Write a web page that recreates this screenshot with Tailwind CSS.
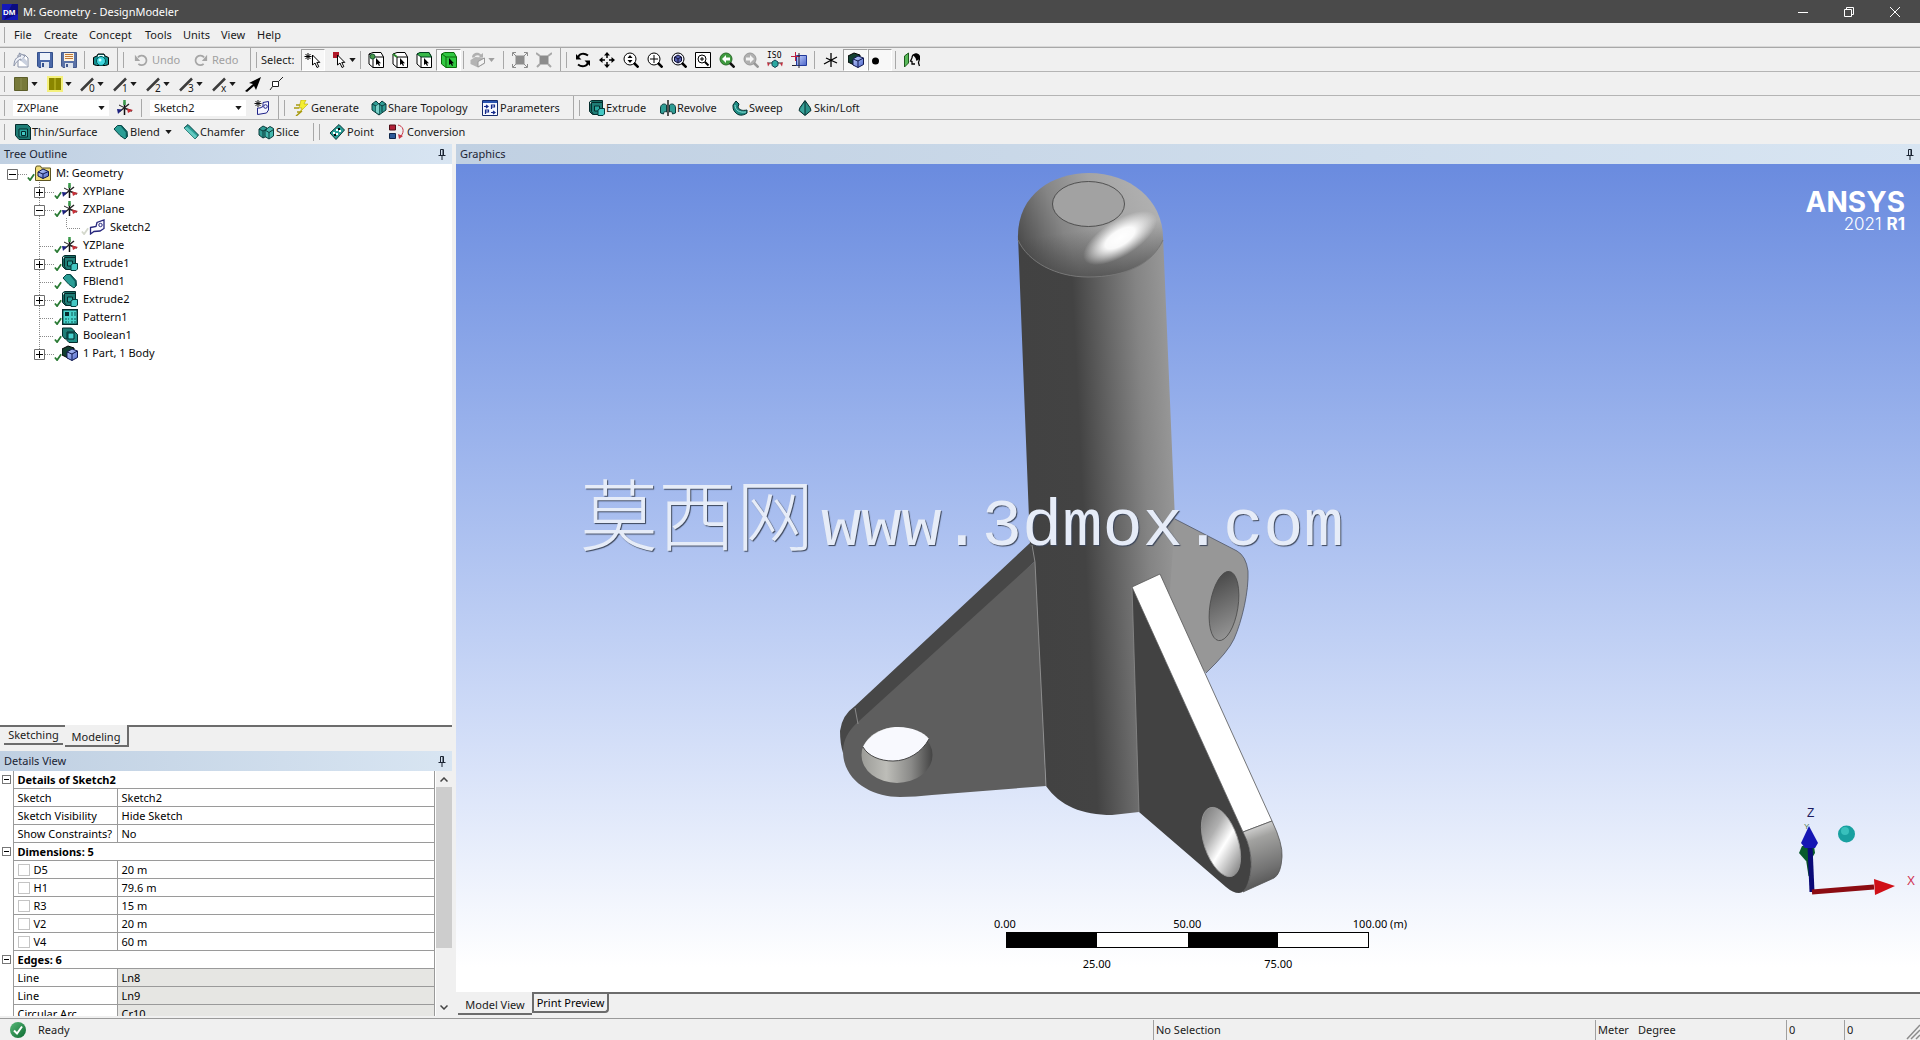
<!DOCTYPE html>
<html lang="en">
<head>
<meta charset="utf-8">
<title>M: Geometry - DesignModeler</title>
<script src="https://cdn.jsdelivr.net/npm/@tailwindcss/browser@4"></script>
</head>
<body class="flex h-screen flex-col overflow-hidden bg-[#f0f0f0] font-['Noto_Sans',sans-serif] text-[11px] leading-4 text-[#1a1a1a]">

<svg class="absolute size-0" aria-hidden="true">
  <defs>
    <linearGradient id="blueFace" x1="0" y1="0" x2="1" y2="1"><stop offset="0" stop-color="#c6d4ff"/><stop offset="1" stop-color="#4a63c8"/></linearGradient>
    <linearGradient id="okFace" x1="0" y1="0" x2="1" y2="1"><stop offset="0" stop-color="#58b878"/><stop offset="1" stop-color="#0c6a30"/></linearGradient>
  </defs>
  <symbol id="caret" viewBox="0 0 8 5"><path d="M0 0h8L4 5z" fill="currentColor"/></symbol>
  <symbol id="pin" viewBox="0 0 8 11"><path d="M2.500.5h3v6h-3zM.5 6.500h7M4 7v4" fill="none" stroke="#1b2433"/><path d="M4.500 1h1v5.500h-1z" fill="#1b2433"/></symbol>
  <symbol id="new" viewBox="0 0 16 16"><path d="M5 3h7l3 3v9H5z" fill="#fff" stroke="#8a93a8"/><path d="M1 14C1 8 3 5 8 4L6 1l6 3-4 5V7c-3 1-5 3-7 7z" fill="#eef1f8" stroke="#8a93a8"/><path d="M10 5l4 4v5L8 9z" fill="#c9d0de"/></symbol>
  <symbol id="save" viewBox="0 0 16 16"><path d="M.5.5h15v15H2l-1.500-1.500z" fill="#4a68a8" stroke="#34508c"/><path d="M3 1h10v7H3z" fill="#eef3fa"/><path d="M4 10h8v6H4z" fill="#dfe5ee"/><path d="M5 11h2v4H5z" fill="#34508c"/></symbol>
  <symbol id="saveas" viewBox="0 0 16 16"><path d="M.5.5h15v15H2l-1.500-1.500z" fill="#5b73a8" stroke="#44598c"/><path d="M3 1h10v8H3z" fill="#fff3dc"/><path d="M4 2.500h8M4 4.500h8M4 6.500h8" stroke="#c07838"/><path d="M4 11h8v5H4z" fill="#dfe5ee"/><path d="M5 12h2v3H5z" fill="#44598c"/></symbol>
  <symbol id="camera" viewBox="0 0 16 16"><path d="M.5 5.500L4 4l1-2h6l1 2 3.500 1.500v7l-3 1h-9l-3-1z" fill="#138f8f" stroke="#000"/><path d="M5 3h6v2H5z" fill="#e8ffff"/><circle cx="8" cy="9" r="4.500" fill="#3fd8e0" stroke="#055"/><circle cx="7" cy="8" r="1.500" fill="#c8ffff"/></symbol>
  <symbol id="undo" viewBox="0 0 16 16"><path d="M4.500 5A5.500 5.500 0 1 1 5 12.500" fill="none" stroke="#a6a6a6" stroke-width="2"/><path d="M1 2v7h6z" fill="#a6a6a6"/></symbol>
  <symbol id="redo" viewBox="0 0 16 16"><path d="M11.500 5A5.500 5.500 0 1 0 11 12.500" fill="none" stroke="#a6a6a6" stroke-width="2"/><path d="M15 2v7H9z" fill="#a6a6a6"/></symbol>
  <symbol id="pick" viewBox="0 0 18 16"><path d="M4 1v7M.5 4.500h7M1.500 2l5 5M6.500 2l-5 5" stroke="#000"/><path d="M8.500 3v10l2.500-2 2 4.500 1.800-.9-2-4.200h3z" fill="#fff" stroke="#000"/></symbol>
  <symbol id="pickred" viewBox="0 0 18 16"><path d="M2 0h6v6H2z" fill="#b01828"/><path d="M6.500 3v10l2.500-2 2 4.500 1.800-.9-2-4.200h3z" fill="#fff" stroke="#000"/></symbol>
  <symbol id="cubeV" viewBox="0 0 16 16"><path d="M1 2l4-1.500h8L15.500 5v10.500H5L1 12z" fill="#fff" stroke="#000"/><path d="M1 2l4 3h10.500M5 5v10.500" fill="none" stroke="#000"/><circle cx="4.500" cy="4.500" r="2.500" fill="#4a9a4a" stroke="#153"/><path d="M8 6v7l1.700-1.300L11 14l1-.5-1-2.300h2z"/></symbol>
  <symbol id="cubeE" viewBox="0 0 16 16"><path d="M1 2l4-1.500h8L15.500 5v10.500H5L1 12z" fill="#fff" stroke="#000"/><path d="M1 2l4 3h10.500M5 5v10.500" fill="none" stroke="#000"/><path d="M1 2l4 3" stroke="#2c8a2c" stroke-width="2"/><path d="M8 6v7l1.700-1.300L11 14l1-.5-1-2.300h2z"/></symbol>
  <symbol id="cubeF" viewBox="0 0 16 16"><path d="M1 2l4-1.500h8L15.500 5v10.500H5L1 12z" fill="#fff" stroke="#000"/><path d="M1 2l3-1.500h9L15.500 5H5z" fill="#38b848" stroke="#042"/><path d="M5 5v10.500" stroke="#000"/><path d="M8 6v7l1.700-1.300L11 14l1-.5-1-2.300h2z"/></symbol>
  <symbol id="cubeB" viewBox="0 0 16 16"><path d="M.5 2l3-1.500h9.500L15.500 5v10.500H5L.5 12z" fill="#30c840" stroke="#0a6a0a"/><path d="M1 2l4 3h10.500M5 5v10.500" fill="none" stroke="#0a6a0a"/><path d="M8 6v7l1.700-1.300L11 14l1-.5-1-2.300h2z"/></symbol>
  <symbol id="cubeG" viewBox="0 0 16 16"><path d="M.5 8l5-3 9.500 1v5.500L8 15.500.5 12z" fill="#b4b4b4"/><path d="M8 9.500l6.500-3.500v5L8 15z" fill="#f4f4f4" stroke="#9a9a9a"/><path d="M2 5.500C2 1 8-1 11 2.500l2-1.500v4.500H8.500l1.500-1.500C8 2.500 5 3 4.500 5.500z" fill="#b0b0b0"/></symbol>
  <symbol id="ext1" viewBox="0 0 16 16"><path d="M3.500 3.500h9v9h-9z" fill="#8c8c8c"/><path d="M.5 4V.5H4M12 .5h3.500V4M15.500 12v3.500H12M4 15.500H.5V12M1 1l3 3M15 1l-3 3M15 15l-3-3M1 15l3-3" fill="none" stroke="#8c8c8c"/></symbol>
  <symbol id="ext2" viewBox="0 0 16 16"><path d="M3.500 3.500h9v9h-9z" fill="#8c8c8c"/><path d="M0 1l4 3M16 1l-4 3M15 15l-3-3M1 15l3-3" fill="none" stroke="#a8a8a8" stroke-width="2"/></symbol>
  <symbol id="rotate" viewBox="0 0 16 16"><path d="M3 5.500C4 1.500 9 .5 13 3.500M13 10.500C12 14.500 7 15.500 3 12.500" fill="none" stroke="#000" stroke-width="2"/><path d="M1 2v5.500h5.500zM15 14V8.500H9.500z"/></symbol>
  <symbol id="pan" viewBox="0 0 16 16"><path d="M8 2v4M8 10v4M2 8h4M10 8h4" stroke="#000" stroke-width="1.500"/><path d="M8 0l3 3.500H5zM8 16l3-3.500H5zM0 8l3.500-3v6zM16 8l-3.500-3v6z"/></symbol>
  <symbol id="zoomud" viewBox="0 0 16 16"><circle cx="7" cy="7" r="6" fill="#fff" stroke="#000"/><path d="M11 11l4.500 4.500" stroke="#000" stroke-width="2.500"/><path d="M7 3l2.500 3h-5zM7 11l2.500-3h-5z"/></symbol>
  <symbol id="zoomin" viewBox="0 0 16 16"><circle cx="7" cy="7" r="6" fill="#fff" stroke="#000"/><path d="M11 11l4.500 4.500" stroke="#000" stroke-width="2.500"/><path d="M7 3v8M3 7h8" stroke="#000"/></symbol>
  <symbol id="zoomfit" viewBox="0 0 16 16"><circle cx="7" cy="7" r="6" fill="#f2f4ff" stroke="#000"/><path d="M11 11l4.500 4.500" stroke="#000" stroke-width="2.500"/><path d="M7 3l3.500 2v4L7 11 3.500 9V5z" fill="#5a64b4" stroke="#113"/><path d="M4 5l3 2 3-2M7 7v4" stroke="#113" fill="none"/></symbol>
  <symbol id="zoombox" viewBox="0 0 16 16"><path d="M.5.5h15v15H.5z" fill="#fff" stroke="#000"/><circle cx="7" cy="7" r="4" fill="none" stroke="#000"/><path d="M10 10l3.500 3.500" stroke="#000" stroke-width="2"/><path d="M7 5v4M5 7h4" stroke="#000"/></symbol>
  <symbol id="zoomprev" viewBox="0 0 16 16"><circle cx="7" cy="7" r="6" fill="#3f9a3f" stroke="#2a6a2a"/><path d="M11 11l4.500 4.500" stroke="#111" stroke-width="2.500"/><path d="M3 7l4-4v2.500h4v3H7V11z" fill="#fff"/></symbol>
  <symbol id="zoomnext" viewBox="0 0 16 16"><circle cx="7" cy="7" r="6" fill="#b0b0b0" stroke="#989898"/><path d="M11 11l4.500 4.500" stroke="#989898" stroke-width="2.500"/><path d="M11 7L7 3v2.500H3v3h4V11z" fill="#f4f4f4"/></symbol>
  <symbol id="iso" viewBox="0 0 16 18"><text x="0" y="7" font-size="8" font-family="DejaVu Sans Mono" fill="#000">ISO</text><path d="M8 9l3 2v3.500l-3 2-3-2V11z" fill="#2aa8a0" stroke="#145"/><path d="M5 12H1M11 12h4" stroke="#333"/><path d="M0 11l3 1.500-2 3zM16 11l-3 1.500 2 3z" fill="#c03040"/></symbol>
  <symbol id="viewblue" viewBox="0 0 16 16"><path d="M5.500 3.500h10v10h-10z" fill="url(#blueFace)" stroke="#223a9a"/><path d="M0 4.500h9M4.500 0v9" stroke="#c02040"/><path d="M1 13.500h4.500M8 1v15" stroke="#223"/></symbol>
  <symbol id="axesbw" viewBox="0 0 16 16"><path d="M8 1v14M1 12l13-7M3 6l11 5" stroke="#000" stroke-width="1.300"/></symbol>
  <symbol id="axes" viewBox="0 0 16 16"><path d="M7.500 2v13" stroke="#111" stroke-width="1.500"/><path d="M7.500 0v5" stroke="#3a9a4a" stroke-width="2.500"/><path d="M7 8l8 3" stroke="#222" stroke-width="1.500"/><path d="M10 8.500l6 1.500-5 3z" fill="#c83038"/><path d="M12 4L2 12" stroke="#222" stroke-width="1.500"/><path d="M0 9l5 .5L1 14z" fill="#1c2080"/><path d="M2 5l6 3" stroke="#222"/></symbol>
  <symbol id="solid" viewBox="0 0 16 16"><path d="M0 4l6-3 6 2v8l-6 2-6-3z" fill="#123f30" stroke="#000"/><path d="M5 7l5-3 5.500 2v6.500L10 15.500 5 13z" fill="url(#blueFace)" stroke="#101850"/><path d="M5 7l5 2 5.500-3M10 9v6.500" fill="none" stroke="#101850"/></symbol>
  <symbol id="dot" viewBox="0 0 16 16"><circle cx="3.500" cy="9" r="3.500"/></symbol>
  <symbol id="lookat" viewBox="0 0 16 16"><path d="M.5 4l4-3v10l-4 4z" fill="#58b858" stroke="#1c5a1c"/><path d="M8 6c0-5 7-5 7.500-1 .5 3-1 4-1 6l1 3M8 6l-1.500 3L8 9.500V12h3" fill="none" stroke="#000" stroke-width="1.300"/><path d="M9 3c3-3 7-1 6.500 4l-3 2-1-3z"/></symbol>
  <symbol id="olive" viewBox="0 0 14 14"><path d="M.5.5h13v13H.5z" fill="#77793a" stroke="#5c5e2a"/><path d="M7 1v12" stroke="#8c8e50"/></symbol>
  <symbol id="yellow" viewBox="0 0 16 16"><path d="M0 0h16v16H0z" fill="#f4f07c"/><path d="M2 2h12v12H2z" fill="#8a8600"/><path d="M8 2v12" stroke="#c8c430"/></symbol>
  <symbol id="slash" viewBox="0 0 16 16"><path d="M1 14.500L13 2.500" stroke="#3c3c3c" stroke-width="2.500"/></symbol>
  <symbol id="bigarrow" viewBox="0 0 16 16"><path d="M0 15L8 8 4 7 16 1l-5 13-2-4-7 6z"/></symbol>
  <symbol id="node" viewBox="0 0 16 16"><path d="M3.500 5.500h6v5h-6zM9.500 5.500L14 1M3.500 10.500L1 14" fill="#fff" stroke="#222"/></symbol>
  <symbol id="newsketch" viewBox="0 0 16 16"><path d="M3.500 8v6.500l9-1.500 2-3V1.500L9 2.500v4L6 8z" fill="#f4f4ff" stroke="#1e2288"/><circle cx="11.500" cy="6.500" r="1.800" fill="none" stroke="#1e2288"/><path d="M4 0v7M.5 3.500h7M1.500 1l5 5M6.500 1l-5 5" stroke="#111"/></symbol>
  <symbol id="sketch" viewBox="0 0 16 16"><path d="M1.500 8.500L7 7.500l1-4L15 1v8.500L11 12l-6 .5L1.500 15z" fill="#fafaff" stroke="#26267c" stroke-width="1.300"/><circle cx="11.500" cy="6" r="1.700" fill="none" stroke="#26267c"/></symbol>
  <symbol id="bolt" viewBox="0 0 16 16"><path d="M8 0h5l-2 4h4l-8 8 2-4H6z" fill="#f4ee30" stroke="#b8a800" stroke-width=".6"/><path d="M3 5h4M1 8h5M4 12h4M3 16l6-5" stroke="#a89a10" stroke-width="1.500"/></symbol>
  <symbol id="share" viewBox="0 0 16 16"><path d="M1 4l4-3 3 3 3-3 4 3v6l-7 5-7-5z" fill="#2f9c94" stroke="#0c3c3c"/><path d="M1 4l4 2 3-2 3 2 4-2M5 6v6M11 6v6M8 4v11" fill="none" stroke="#0c3c3c"/><path d="M5 6l3-2v10l-3-2z" fill="#7ad0c8"/></symbol>
  <symbol id="param" viewBox="0 0 16 16"><path d="M.5.5h15v15H.5z" fill="#f6f8ff" stroke="#142a6c"/><path d="M1 1h14v2H1z" fill="#2a55b0"/><path d="M2 6.500h3M4 5l2 1.500L4 8M9.500 9V5h3v2h-3M3.500 14v-4h3v2h-3M9 12.500h4M11 11l2 1.500L11 14" fill="none" stroke="#142a8c" stroke-width="1.200"/></symbol>
  <symbol id="extrude" viewBox="0 0 16 16"><path d="M.5 2l2-1.500h11v3M.5 2v9.500l3 3h6" fill="#176a62" stroke="#042c2c"/><path d="M2.500 2.500h11v12h-9l-2-3z" fill="#1f7d76" stroke="#042c2c"/><path d="M5.500 6h5v5h-5z" fill="#2aa69e" stroke="#042c2c"/><path d="M9 10l2-1.500h4.500V14l-1.500 1.500H9z" fill="#45c8c4" stroke="#053c3c"/></symbol>
  <symbol id="thin" viewBox="0 0 16 16"><path d="M.5.5h12l3 3v12H4l-3.500-4z" fill="#1f7d76" stroke="#042c2c"/><path d="M4 5h8.500v8H4z" fill="#2aa69e" stroke="#042c2c"/><path d="M6.500 7.500h4v4h-4z" fill="#45c8c4" stroke="#042c2c"/></symbol>
  <symbol id="revolve" viewBox="0 0 16 16"><path d="M.5 8c0-4 4-5 6-3v7c-2-1-3 0-3 2l-3-1zM15.500 8c0-4-4-5-6-3v7c2-1 3 0 3 2l3-1z" fill="#2f9c94" stroke="#0c3c3c"/><path d="M8 0v16" stroke="#000" stroke-width="1.300"/></symbol>
  <symbol id="sweep" viewBox="0 0 16 16"><path d="M1 5l3-4 3 3-1 3c1 3 4 4 9 3v3c-4 3-9 3-12-1-2-2-2-4-2-7z" fill="#1f8c84" stroke="#042c2c"/><path d="M3 5c0 5 4 8 11 7" fill="none" stroke="#8cded6"/></symbol>
  <symbol id="loft" viewBox="0 0 16 16"><path d="M8 .5l5 7 1 3-6 5-6-5 1-3z" fill="#2a9088" stroke="#042c2c"/><path d="M8 2v12.500l-5-4.500z" fill="#3ca49c"/><path d="M8 1v14" stroke="#042c2c"/></symbol>
  <symbol id="blend" viewBox="0 0 16 16"><path d="M1 5l3.500-3.500h4l5.500 6 .5 5-2.500 2.500-5-3.500z" fill="#2a9e96" stroke="#064444"/><path d="M8.500 2l5 6v5" fill="none" stroke="#0d5a58" stroke-width="1.500"/></symbol>
  <symbol id="chamfer" viewBox="0 0 16 16"><path d="M1 4l4-3.500L15.500 11 12 15z" fill="#2a9e96" stroke="#064444"/><path d="M1 4l3-1 10 9-2 3z" fill="#64c8c0"/></symbol>
  <symbol id="slice" viewBox="0 0 16 16"><path d="M1 5l4-3 4 2v8l-4 2-4-3z" fill="#2f9c94" stroke="#0c3c3c"/><path d="M7 6l5-3.500 3.500 2V12L11 15l-4-2.500z" fill="#45b8ae" stroke="#0c3c3c"/><path d="M1 5l4 2 4-2M5 7v7M7 6l4 2.500 4.500-3M11 8.500V15" fill="none" stroke="#0c3c3c"/></symbol>
  <symbol id="point" viewBox="0 0 16 16"><path d="M1 9L10 .5 15.500 6 7 15.500z" fill="#2a9e96" stroke="#043838"/><path d="M4 9h2M7 6h2M7 10h2M10 7h2" stroke="#fff" stroke-width="2"/><path d="M5 11h2M10 4v2" stroke="#000" stroke-width="2"/></symbol>
  <symbol id="convert" viewBox="0 0 16 16"><path d="M.5 1h6v5h-6z" fill="#b02038" stroke="#501018"/><path d="M.5 9.500h6v5h-6z" fill="#2c5a98" stroke="#10284c"/><path d="M9 1c5 1 7 6 3 11" fill="none" stroke="#c83848"/><path d="M9 10l1 5 4-3z" fill="#c83848"/></symbol>
  <symbol id="pattern" viewBox="0 0 16 16"><path d="M.7.700h14.600v14.600H.7z" fill="#48d4cc" stroke="#042c2c" stroke-width="1.400"/><path d="M3 3h4v4H3z" fill="#042c2c"/><path d="M9 4h5M9 6h5M3 10h4M3 13h4M9 10h5M9 13h5" stroke="#0a5450" stroke-dasharray="2 1"/></symbol>
  <symbol id="boolean" viewBox="0 0 16 16"><path d="M.5 1h9l3 3v8H3l-2.500-3z" fill="#1f7d76" stroke="#042c2c"/><path d="M5 5h8l2.500 2.500v8H7l-2-2z" fill="#1f8c84" stroke="#042c2c"/><path d="M6 6h6v6H6z" fill="#45d0cc" stroke="#042c2c"/></symbol>
  <symbol id="model" viewBox="0 0 16 16"><path d="M.5 3l1-2h4l1 2h9v12.500H.5z" fill="#f0dc78" stroke="#5c5420"/><path d="M3 7l5-3 5.500 2.500V11L8 13.500 3 11z" fill="url(#blueFace)" stroke="#101850"/><path d="M3 7l5 2 5.500-2.500M8 9v4.500" fill="none" stroke="#101850"/></symbol>
  <symbol id="check" viewBox="0 0 9 9"><path d="M1 5l2.500 3L8 1.500" fill="none" stroke="currentColor" stroke-width="2"/></symbol>
  <symbol id="plus" viewBox="0 0 27 18"><path d="M12.500 0v18M18 10.500h9" stroke="#8a8a8a" stroke-dasharray="1 1"/><path d="M7.500 5.500h10v10h-10z" fill="#fff" stroke="#6e6e6e"/><path d="M9 10.500h7M12.500 7v7" stroke="#000"/></symbol>
  <symbol id="plusend" viewBox="0 0 27 18"><path d="M12.500 0v6M18 10.500h9" stroke="#8a8a8a" stroke-dasharray="1 1"/><path d="M7.500 5.500h10v10h-10z" fill="#fff" stroke="#6e6e6e"/><path d="M9 10.500h7M12.500 7v7" stroke="#000"/></symbol>
  <symbol id="minus" viewBox="0 0 27 18"><path d="M12.500 0v18M18 10.500h9" stroke="#8a8a8a" stroke-dasharray="1 1"/><path d="M7.500 5.500h10v10h-10z" fill="#fff" stroke="#6e6e6e"/><path d="M9 10.500h7" stroke="#000"/></symbol>
  <symbol id="minusroot" viewBox="0 0 27 18"><path d="M18 10.500h9" stroke="#8a8a8a" stroke-dasharray="1 1"/><path d="M7.500 5.500h10v10h-10z" fill="#fff" stroke="#6e6e6e"/><path d="M9 10.500h7" stroke="#000"/></symbol>
  <symbol id="tee" viewBox="0 0 27 18"><path d="M12.500 0v18M13 10.500h14" stroke="#8a8a8a" stroke-dasharray="1 1"/></symbol>
  <symbol id="ell" viewBox="0 0 27 18"><path d="M12.500 0v10M13 10.500h14" stroke="#8a8a8a" stroke-dasharray="1 1"/></symbol>
  <symbol id="vert" viewBox="0 0 27 18"><path d="M12.500 0v18" stroke="#8a8a8a" stroke-dasharray="1 1"/></symbol>
</svg>

<header class="flex h-[23px] shrink-0 items-center bg-[#4a4a4a] text-white">
  <svg class="ml-[2px] size-4" viewBox="0 0 16 16"><path d="M0 0h16v16H0z" fill="#1418b8"/><path d="M2 16L10 0h6v10z" fill="#0a0c80"/><text x="1" y="11" font-size="8" font-weight="700" fill="#fff" font-family="Liberation Sans">DM</text></svg>
  <h1 class="ml-[5px] flex-1">M: Geometry - DesignModeler</h1>
  <button aria-label="Minimize" class="grid h-full w-[46px] place-items-center"><svg class="size-[10px]" viewBox="0 0 10 10"><path d="M0 5.500h10" stroke="#fff"/></svg></button>
  <button aria-label="Restore" class="grid h-full w-[46px] place-items-center"><svg class="size-[10px]" viewBox="0 0 10 10"><path d="M.5 2.500h7v7h-7zM2.500 2V.5h7v7H8" fill="none" stroke="#fff"/></svg></button>
  <button aria-label="Close" class="grid h-full w-[46px] place-items-center"><svg class="size-[10px]" viewBox="0 0 10 10"><path d="M0 0l10 10M10 0L0 10" stroke="#fff"/></svg></button>
  <span class="w-0.5"></span>
</header>

<nav class="flex h-6 shrink-0 items-center border-b border-[#d8d8d8]" aria-label="Menu">
  <span class="mr-[9px] ml-1 h-4 w-px bg-[#a8a8a8]"></span>
  <button class="w-[30px] text-left">File</button>
  <button class="w-[45px] text-left">Create</button>
  <button class="w-[56px] text-left">Concept</button>
  <button class="w-[38px] text-left">Tools</button>
  <button class="w-[38px] text-left">Units</button>
  <button class="w-[36px] text-left">View</button>
  <button class="w-[36px] text-left">Help</button>
</nav>

<div class="flex h-[25px] shrink-0 items-center border-y border-b-[#b4b4b4] border-t-[#a8a8a8]" role="toolbar" aria-label="Standard">
  <span class="mr-1 ml-1 h-4 w-px bg-[#a8a8a8]"></span>
  <button aria-label="New" class="grid w-6 place-items-center"><svg class="size-4"><use href="#new"/></svg></button>
  <button aria-label="Save" class="grid w-6 place-items-center"><svg class="size-4"><use href="#save"/></svg></button>
  <button aria-label="Export" class="grid w-6 place-items-center"><svg class="size-4"><use href="#saveas"/></svg></button>
  <span class="mx-[3px] h-[18px] w-px bg-[#a8a8a8]"></span>
  <button aria-label="Capture" class="grid w-[26px] place-items-center"><svg class="size-4"><use href="#camera"/></svg></button>
  <span class="mr-[5px] ml-[3px] h-full w-px bg-[#a8a8a8]"></span>
  <span class="mr-[10px] h-4 w-px bg-[#a8a8a8]"></span>
  <button class="flex w-[60px] items-center gap-1 text-[#a0a0a0]"><svg class="size-[14px]"><use href="#undo"/></svg>Undo</button>
  <button class="flex w-[56px] items-center gap-1 text-[#a0a0a0]"><svg class="size-[14px]"><use href="#redo"/></svg>Redo</button>
  <span class="mr-[5px] h-full w-px bg-[#a8a8a8]"></span>
  <span class="mr-1 h-4 w-px bg-[#a8a8a8]"></span>
  <span class="w-10">Select:</span>
  <button aria-label="New selection" class="grid h-[22px] w-6 place-items-center border border-r-white border-b-white border-l-[#a0a0a0] border-t-[#a0a0a0] bg-[#f8f8f8]"><svg class="h-4 w-[18px]"><use href="#pick"/></svg></button>
  <button aria-label="Select mode" class="flex w-[31px] items-center justify-end"><svg class="h-4 w-[18px]"><use href="#pickred"/></svg><svg class="h-1 w-[7px]"><use href="#caret"/></svg></button>
  <span class="mr-[3px] ml-1 h-[18px] w-px bg-[#a8a8a8]"></span>
  <button aria-label="Points" class="grid w-6 place-items-center"><svg class="size-4"><use href="#cubeV"/></svg></button>
  <button aria-label="Edges" class="grid w-6 place-items-center"><svg class="size-4"><use href="#cubeE"/></svg></button>
  <button aria-label="Faces" class="grid w-6 place-items-center"><svg class="size-4"><use href="#cubeF"/></svg></button>
  <button aria-label="Bodies" class="grid h-[22px] w-[25px] place-items-center border border-r-white border-b-white border-l-[#a0a0a0] border-t-[#a0a0a0] bg-[#f8f8f8]"><svg class="size-4"><use href="#cubeB"/></svg></button>
  <span class="mr-1.5 ml-0.5 h-[18px] w-px bg-[#a8a8a8]"></span>
  <button aria-label="Extend" class="flex w-[28px] items-center gap-0.5 text-[#a0a0a0]"><svg class="size-4"><use href="#cubeG"/></svg><svg class="h-1 w-[7px]"><use href="#caret"/></svg></button>
  <span class="mr-1 ml-[5px] h-[18px] w-px bg-[#a8a8a8]"></span>
  <button aria-label="Expand" class="grid w-6 place-items-center"><svg class="size-4"><use href="#ext1"/></svg></button>
  <button aria-label="Shrink" class="grid w-6 place-items-center"><svg class="size-4"><use href="#ext2"/></svg></button>
  <span class="mr-[5px] ml-1 h-full w-px bg-[#a8a8a8]"></span>
  <span class="mr-1 h-4 w-px bg-[#a8a8a8]"></span>
  <button aria-label="Rotate" class="grid w-6 place-items-center"><svg class="size-4"><use href="#rotate"/></svg></button>
  <button aria-label="Pan" class="grid w-6 place-items-center"><svg class="size-4"><use href="#pan"/></svg></button>
  <button aria-label="Zoom" class="grid w-6 place-items-center"><svg class="size-4"><use href="#zoomud"/></svg></button>
  <button aria-label="Box zoom" class="grid w-6 place-items-center"><svg class="size-4"><use href="#zoomin"/></svg></button>
  <button aria-label="Zoom to fit" class="grid w-6 place-items-center"><svg class="size-4"><use href="#zoomfit"/></svg></button>
  <button aria-label="Magnifier" class="grid w-6 place-items-center"><svg class="size-4"><use href="#zoombox"/></svg></button>
  <button aria-label="Previous view" class="grid w-6 place-items-center"><svg class="size-4"><use href="#zoomprev"/></svg></button>
  <button aria-label="Next view" class="grid w-6 place-items-center"><svg class="size-4"><use href="#zoomnext"/></svg></button>
  <button aria-label="Isometric" class="grid w-6 place-items-center"><svg class="h-[18px] w-4"><use href="#iso"/></svg></button>
  <button aria-label="Plane view" class="grid w-6 place-items-center"><svg class="size-4"><use href="#viewblue"/></svg></button>
  <span class="mr-1 ml-[3px] h-[18px] w-px bg-[#a8a8a8]"></span>
  <button aria-label="Display plane" class="grid w-6 place-items-center"><svg class="size-4"><use href="#axesbw"/></svg></button>
  <button aria-label="Display model" class="grid h-[22px] w-[25px] place-items-center border border-r-white border-b-white border-l-[#a0a0a0] border-t-[#a0a0a0] bg-[#f8f8f8]"><svg class="size-4"><use href="#solid"/></svg></button>
  <button aria-label="Display points" class="grid h-[22px] w-6 place-items-center border border-r-white border-b-white border-l-[#a0a0a0] border-t-[#a0a0a0] bg-[#f8f8f8]"><svg class="size-4"><use href="#dot"/></svg></button>
  <span class="mr-1 ml-[3px] h-[18px] w-px bg-[#a8a8a8]"></span>
  <button aria-label="Look at" class="grid w-6 place-items-center"><svg class="size-4"><use href="#lookat"/></svg></button>
</div>

<div class="flex h-6 shrink-0 items-center border-b border-[#b4b4b4]" role="toolbar" aria-label="Display">
  <span class="mr-[9px] ml-1 h-4 w-px bg-[#a8a8a8]"></span>
  <button aria-label="Face colour" class="flex w-[33px] items-center gap-[3px]"><svg class="size-[14px]"><use href="#olive"/></svg><svg class="h-1 w-[7px]"><use href="#caret"/></svg></button>
  <button aria-label="Edge colour" class="flex w-[33px] items-center gap-0.5"><svg class="size-4"><use href="#yellow"/></svg><svg class="h-1 w-[7px]"><use href="#caret"/></svg></button>
  <button aria-label="Edges 0" class="relative flex w-[33px] items-center gap-px"><svg class="size-4"><use href="#slash"/></svg><span class="absolute top-1 left-[9px] text-[10px]">0</span><svg class="h-1 w-[7px]"><use href="#caret"/></svg></button>
  <button aria-label="Edges 1" class="relative flex w-[33px] items-center gap-px"><svg class="size-4"><use href="#slash"/></svg><span class="absolute top-1 left-[9px] text-[10px]">1</span><svg class="h-1 w-[7px]"><use href="#caret"/></svg></button>
  <button aria-label="Edges 2" class="relative flex w-[33px] items-center gap-px"><svg class="size-4"><use href="#slash"/></svg><span class="absolute top-1 left-[9px] text-[10px]">2</span><svg class="h-1 w-[7px]"><use href="#caret"/></svg></button>
  <button aria-label="Edges 3" class="relative flex w-[33px] items-center gap-px"><svg class="size-4"><use href="#slash"/></svg><span class="absolute top-1 left-[9px] text-[10px]">3</span><svg class="h-1 w-[7px]"><use href="#caret"/></svg></button>
  <button aria-label="Edges x" class="relative flex w-[33px] items-center gap-px"><svg class="size-4"><use href="#slash"/></svg><span class="absolute top-1 left-[9px] text-[10px]">x</span><svg class="h-1 w-[7px]"><use href="#caret"/></svg></button>
  <button aria-label="Edge direction" class="w-6"><svg class="size-4"><use href="#bigarrow"/></svg></button>
  <button aria-label="Display vertices" class="w-6"><svg class="size-4"><use href="#node"/></svg></button>
</div>

<div class="flex h-6 shrink-0 items-center border-b border-[#b4b4b4]" role="toolbar" aria-label="Features">
  <span class="mr-2 ml-1 h-4 w-px bg-[#a8a8a8]"></span>
  <label class="relative flex w-24 items-center"><select aria-label="Active plane" class="h-4 w-full appearance-none bg-white pl-1 outline-none"><option>ZXPlane</option></select><svg class="pointer-events-none absolute right-1 h-1 w-[7px]"><use href="#caret"/></svg></label>
  <button aria-label="New plane" class="grid w-8 place-items-center"><svg class="size-4"><use href="#axes"/></svg></button>
  <span class="mr-2 h-[18px] w-px bg-[#a8a8a8]"></span>
  <label class="relative flex w-24 items-center"><select aria-label="Active sketch" class="h-4 w-full appearance-none bg-white pl-1 outline-none"><option>Sketch2</option></select><svg class="pointer-events-none absolute right-1 h-1 w-[7px]"><use href="#caret"/></svg></label>
  <button aria-label="New sketch" class="grid w-8 place-items-center"><svg class="size-4"><use href="#newsketch"/></svg></button>
  <span class="mr-[5px] h-full w-px bg-[#a8a8a8]"></span>
  <span class="mr-2 h-4 w-px bg-[#a8a8a8]"></span>
  <button class="flex w-[78px] items-center gap-[2px] whitespace-nowrap"><svg class="size-4 shrink-0"><use href="#bolt"/></svg>Generate</button>
  <button class="flex w-[111px] items-center gap-px whitespace-nowrap"><svg class="size-4 shrink-0"><use href="#share"/></svg>Share Topology</button>
  <button class="flex w-[91px] items-center gap-[2px] whitespace-nowrap"><svg class="size-4 shrink-0"><use href="#param"/></svg>Parameters</button>
  <span class="mr-[5px] h-full w-px bg-[#a8a8a8]"></span>
  <span class="mr-[9px] h-4 w-px bg-[#a8a8a8]"></span>
  <button class="flex w-[71px] items-center gap-px whitespace-nowrap"><svg class="size-4 shrink-0"><use href="#extrude"/></svg>Extrude</button>
  <button class="flex w-[72px] items-center gap-px whitespace-nowrap"><svg class="size-4 shrink-0"><use href="#revolve"/></svg>Revolve</button>
  <button class="flex w-[65px] items-center gap-px whitespace-nowrap"><svg class="size-4 shrink-0"><use href="#sweep"/></svg>Sweep</button>
  <button class="flex w-[72px] items-center gap-px whitespace-nowrap"><svg class="size-4 shrink-0"><use href="#loft"/></svg>Skin/Loft</button>
</div>

<div class="flex h-6 shrink-0 items-center" role="toolbar" aria-label="Modify">
  <span class="mr-[10px] ml-1 h-4 w-px bg-[#a8a8a8]"></span>
  <button class="flex w-[98px] items-center gap-px whitespace-nowrap"><svg class="size-4 shrink-0"><use href="#thin"/></svg>Thin/Surface</button>
  <button class="relative flex w-[70px] items-center gap-px whitespace-nowrap"><svg class="size-4 shrink-0"><use href="#blend"/></svg>Blend<svg class="ml-1 h-1 w-[7px]"><use href="#caret"/></svg></button>
  <button class="flex w-[75px] items-center gap-px whitespace-nowrap"><svg class="size-4 shrink-0"><use href="#chamfer"/></svg>Chamfer</button>
  <button class="flex w-[55px] items-center gap-[2px] whitespace-nowrap"><svg class="size-4 shrink-0"><use href="#slice"/></svg>Slice</button>
  <span class="mr-[5px] h-[18px] w-px bg-[#a8a8a8]"></span>
  <span class="mr-[9px] h-4 w-px bg-[#a8a8a8]"></span>
  <button class="flex w-[60px] items-center gap-[2px] whitespace-nowrap"><svg class="size-4 shrink-0"><use href="#point"/></svg>Point</button>
  <button class="flex w-[80px] items-center gap-[2px] whitespace-nowrap"><svg class="size-4 shrink-0"><use href="#convert"/></svg>Conversion</button>
</div>

<main class="flex min-h-0 flex-1">
  <aside class="flex w-[452px] shrink-0 flex-col">
    <section class="flex min-h-0 flex-1 flex-col">
      <div class="flex h-5 shrink-0 items-center justify-between bg-linear-to-r from-[#c0d0e2] to-[#d8e5f2] pr-[6px] pl-1">
        <h2 class="text-[#1b2433]">Tree Outline</h2>
        <button aria-label="Pin tree outline"><svg class="h-[11px] w-2"><use href="#pin"/></svg></button>
      </div>
      <ul class="min-h-0 flex-1 bg-white text-[#0a0a0a]">
        <li class="flex h-[18px] items-center"><svg class="h-[18px] w-[27px]"><use href="#minusroot"/></svg><svg class="mt-2 size-2 text-[#2a7a34]"><use href="#check"/></svg><svg class="mr-[5px] size-4"><use href="#model"/></svg><span>M: Geometry</span></li>
        <li class="flex h-[18px] items-center pl-[27px]"><svg class="h-[18px] w-[27px]"><use href="#plus"/></svg><svg class="mt-2 size-2 text-[#2a7a34]"><use href="#check"/></svg><svg class="mr-[5px] size-4"><use href="#axes"/></svg><span>XYPlane</span></li>
        <li class="flex h-[18px] items-center pl-[27px]"><svg class="h-[18px] w-[27px]"><use href="#minus"/></svg><svg class="mt-2 size-2 text-[#2a7a34]"><use href="#check"/></svg><svg class="mr-[5px] size-4"><use href="#axes"/></svg><span>ZXPlane</span></li>
        <li class="flex h-[18px] items-center pl-[27px]"><svg class="h-[18px] w-[27px]"><use href="#vert"/></svg><svg class="h-[18px] w-[27px]"><use href="#ell"/></svg><svg class="mt-2 size-2 text-[#d4d8cc]"><use href="#check"/></svg><svg class="mr-[5px] size-4"><use href="#sketch"/></svg><span>Sketch2</span></li>
        <li class="flex h-[18px] items-center pl-[27px]"><svg class="h-[18px] w-[27px]"><use href="#tee"/></svg><svg class="mt-2 size-2 text-[#2a7a34]"><use href="#check"/></svg><svg class="mr-[5px] size-4"><use href="#axes"/></svg><span>YZPlane</span></li>
        <li class="flex h-[18px] items-center pl-[27px]"><svg class="h-[18px] w-[27px]"><use href="#plus"/></svg><svg class="mt-2 size-2 text-[#2a7a34]"><use href="#check"/></svg><svg class="mr-[5px] size-4"><use href="#extrude"/></svg><span>Extrude1</span></li>
        <li class="flex h-[18px] items-center pl-[27px]"><svg class="h-[18px] w-[27px]"><use href="#tee"/></svg><svg class="mt-2 size-2 text-[#2a7a34]"><use href="#check"/></svg><svg class="mr-[5px] size-4"><use href="#blend"/></svg><span>FBlend1</span></li>
        <li class="flex h-[18px] items-center pl-[27px]"><svg class="h-[18px] w-[27px]"><use href="#plus"/></svg><svg class="mt-2 size-2 text-[#2a7a34]"><use href="#check"/></svg><svg class="mr-[5px] size-4"><use href="#extrude"/></svg><span>Extrude2</span></li>
        <li class="flex h-[18px] items-center pl-[27px]"><svg class="h-[18px] w-[27px]"><use href="#tee"/></svg><svg class="mt-2 size-2 text-[#2a7a34]"><use href="#check"/></svg><svg class="mr-[5px] size-4"><use href="#pattern"/></svg><span>Pattern1</span></li>
        <li class="flex h-[18px] items-center pl-[27px]"><svg class="h-[18px] w-[27px]"><use href="#tee"/></svg><svg class="mt-2 size-2 text-[#2a7a34]"><use href="#check"/></svg><svg class="mr-[5px] size-4"><use href="#boolean"/></svg><span>Boolean1</span></li>
        <li class="flex h-[18px] items-center pl-[27px]"><svg class="h-[18px] w-[27px]"><use href="#plusend"/></svg><svg class="mt-2 size-2 text-[#2a7a34]"><use href="#check"/></svg><svg class="mr-[5px] size-4"><use href="#solid"/></svg><span>1 Part, 1 Body</span></li>
      </ul>
      <div class="flex h-[26px] shrink-0 items-start" role="tablist">
        <div class="flex h-5 w-[65px] border-t-2 border-[#6c6c6c] pl-1"><button role="tab" class="h-[18px] w-[59px] border-b-2 border-[#6c6c6c] text-center">Sketching</button></div>
        <button role="tab" aria-selected="true" class="h-[22px] w-16 border-r-2 border-b-2 border-[#6c6c6c] pt-1 text-center">Modeling</button>
        <div class="h-0.5 flex-1 bg-[#6c6c6c]"></div>
      </div>
    </section>

    <section class="flex shrink-0 flex-col">
      <div class="flex h-5 items-center justify-between bg-linear-to-r from-[#c0d0e2] to-[#d8e5f2] pr-[6px] pl-1">
        <h2 class="text-[#1b2433]">Details View</h2>
        <button aria-label="Pin details view"><svg class="h-[11px] w-2"><use href="#pin"/></svg></button>
      </div>
      <div class="flex h-[245px] overflow-hidden bg-white text-black">
        <div class="min-w-0 flex-1 overflow-hidden pr-px">
        <table class="-mt-px w-full table-fixed border-collapse">
          <colgroup><col class="w-[13px]"><col class="w-[104px]"><col></colgroup>
          <tbody class="[&_tr]:h-[18px] [&_td]:p-0 [&_td]:leading-[17px] [&_th]:p-0 [&_th]:text-left [&_th]:leading-[17px]">
            <tr><td><button aria-label="Collapse details" class="ml-0.5 grid size-[9px] place-items-center border border-[#777]"><span class="h-px w-[5px] bg-black"></span></button></td><th colspan="2" class="border border-[#9a9a9a]"><span class="pl-1">Details of Sketch2</span></th></tr>
            <tr><td></td><td class="border border-[#9a9a9a]"><span class="pl-1 whitespace-nowrap">Sketch</span></td><td class="border border-[#9a9a9a]"><span class="pl-1">Sketch2</span></td></tr>
            <tr><td></td><td class="border border-[#9a9a9a]"><span class="pl-1 whitespace-nowrap">Sketch Visibility</span></td><td class="border border-[#9a9a9a]"><span class="pl-1">Hide Sketch</span></td></tr>
            <tr><td></td><td class="border border-[#9a9a9a]"><span class="pl-1 whitespace-nowrap">Show Constraints?</span></td><td class="border border-[#9a9a9a]"><span class="pl-1">No</span></td></tr>
            <tr><td><button aria-label="Collapse dimensions" class="ml-0.5 grid size-[9px] place-items-center border border-[#777]"><span class="h-px w-[5px] bg-black"></span></button></td><th colspan="2" class="border border-[#9a9a9a]"><span class="pl-1">Dimensions: 5</span></th></tr>
            <tr><td></td><td class="border border-[#9a9a9a]"><label class="flex h-[17px] items-center gap-1 pl-1"><input type="checkbox" class="size-3 appearance-none border border-[#c4c4c4] bg-white">D5</label></td><td class="border border-[#9a9a9a]"><span class="pl-1">20 m</span></td></tr>
            <tr><td></td><td class="border border-[#9a9a9a]"><label class="flex h-[17px] items-center gap-1 pl-1"><input type="checkbox" class="size-3 appearance-none border border-[#c4c4c4] bg-white">H1</label></td><td class="border border-[#9a9a9a]"><span class="pl-1">79.6 m</span></td></tr>
            <tr><td></td><td class="border border-[#9a9a9a]"><label class="flex h-[17px] items-center gap-1 pl-1"><input type="checkbox" class="size-3 appearance-none border border-[#c4c4c4] bg-white">R3</label></td><td class="border border-[#9a9a9a]"><span class="pl-1">15 m</span></td></tr>
            <tr><td></td><td class="border border-[#9a9a9a]"><label class="flex h-[17px] items-center gap-1 pl-1"><input type="checkbox" class="size-3 appearance-none border border-[#c4c4c4] bg-white">V2</label></td><td class="border border-[#9a9a9a]"><span class="pl-1">20 m</span></td></tr>
            <tr><td></td><td class="border border-[#9a9a9a]"><label class="flex h-[17px] items-center gap-1 pl-1"><input type="checkbox" class="size-3 appearance-none border border-[#c4c4c4] bg-white">V4</label></td><td class="border border-[#9a9a9a]"><span class="pl-1">60 m</span></td></tr>
            <tr><td><button aria-label="Collapse edges" class="ml-0.5 grid size-[9px] place-items-center border border-[#777]"><span class="h-px w-[5px] bg-black"></span></button></td><th colspan="2" class="border border-[#9a9a9a]"><span class="pl-1">Edges: 6</span></th></tr>
            <tr><td></td><td class="border border-[#9a9a9a]"><span class="pl-1">Line</span></td><td class="border border-[#9a9a9a] bg-[#e6e6e3]"><span class="pl-1">Ln8</span></td></tr>
            <tr><td></td><td class="border border-[#9a9a9a]"><span class="pl-1">Line</span></td><td class="border border-[#9a9a9a] bg-[#e6e6e3]"><span class="pl-1">Ln9</span></td></tr>
            <tr><td></td><td class="border border-[#9a9a9a]"><span class="pl-1">Circular Arc</span></td><td class="border border-[#9a9a9a] bg-[#e6e6e3]"><span class="pl-1">Cr10</span></td></tr>
          </tbody>
        </table>
        </div>
        <div class="flex w-4 flex-col items-center bg-[#f0f0f0]">
          <button aria-label="Scroll up" class="grid h-4 w-full shrink-0 place-items-center"><svg class="h-[5px] w-2" viewBox="0 0 8 5"><path d="M.5 4.500L4 1l3.500 3.500" fill="none" stroke="#444" stroke-width="1.500"/></svg></button>
          <div class="h-[161px] w-full bg-[#cdcdcd]"></div>
          <button aria-label="Scroll down" class="mt-auto grid h-[17px] w-full shrink-0 place-items-center"><svg class="h-[5px] w-2" viewBox="0 0 8 5"><path d="M.5.5L4 4 7.500.5" fill="none" stroke="#444" stroke-width="1.500"/></svg></button>
        </div>
      </div>
    </section>
  </aside>

  <section class="ml-1 flex min-w-0 flex-1 flex-col">
    <div class="flex h-5 shrink-0 items-center justify-between bg-linear-to-r from-[#c0d0e2] to-[#d8e5f2] pr-[6px] pl-1">
      <h2 class="text-[#1b2433]">Graphics</h2>
      <button aria-label="Pin graphics"><svg class="h-[11px] w-2"><use href="#pin"/></svg></button>
    </div>
    <div class="relative min-h-0 flex-1 overflow-hidden bg-linear-to-b from-[#6a8bdf] to-white to-97%">
      <svg class="absolute inset-0 size-full" viewBox="456 164 1464 828" role="img" aria-label="Bracket model">
        <defs>
          <linearGradient id="cyl" gradientUnits="userSpaceOnUse" x1="1018" y1="246" x2="1163" y2="239"><stop offset="0" stop-color="#424242"/><stop offset=".36" stop-color="#434343"/><stop offset=".6" stop-color="#676767"/><stop offset=".8" stop-color="#848484"/><stop offset="1" stop-color="#979797"/></linearGradient>
          <linearGradient id="dome" x1="0" y1=".6" x2="1" y2=".3"><stop offset="0" stop-color="#4e4e4e"/><stop offset=".3" stop-color="#858585"/><stop offset=".6" stop-color="#a4a4a4"/><stop offset="1" stop-color="#b2b2b2"/></linearGradient>
          <linearGradient id="domeShade" x1=".35" y1="0" x2=".55" y2="1"><stop offset=".55" stop-color="#404040" stop-opacity="0"/><stop offset="1" stop-color="#404040" stop-opacity=".7"/></linearGradient>
          <radialGradient id="shine"><stop offset="0" stop-color="#fff"/><stop offset=".4" stop-color="#fff" stop-opacity=".95"/><stop offset="1" stop-color="#fff" stop-opacity="0"/></radialGradient>
          <linearGradient id="boreL"><stop offset="0" stop-color="#9c9c98"/><stop offset=".35" stop-color="#bdbdb8"/><stop offset=".7" stop-color="#8a8a88"/><stop offset="1" stop-color="#444"/></linearGradient>
          <linearGradient id="boreR" x1=".3" y1="0" x2=".6" y2="1"><stop offset="0" stop-color="#484848"/><stop offset="1" stop-color="#959595"/></linearGradient>
          <linearGradient id="boreF" x1=".2" y1="0" x2=".6" y2="1"><stop offset="0" stop-color="#787878"/><stop offset=".35" stop-color="#b0b0b0"/><stop offset=".6" stop-color="#fff"/><stop offset="1" stop-color="#8c8c8c"/></linearGradient>
          <linearGradient id="endF" x1=".3" y1="0" x2=".5" y2="1"><stop offset="0" stop-color="#e4e4e4"/><stop offset=".25" stop-color="#a2a2a0"/><stop offset=".7" stop-color="#727272"/><stop offset="1" stop-color="#4c4c4c"/></linearGradient>
        </defs>
        <path d="M1170 517L1175 519L1237 551Q1246 556 1248 571C1249 591 1242 621 1234 639Q1228 652 1206 673L1150 613L1140 530z" fill="#979797"/>
        <path d="M1175 519L1237 551Q1246 556 1248 571C1249 591 1242 621 1234 639Q1228 652 1206 673" fill="none" stroke="#4f5566" stroke-width=".8"/>
        <path d="M1018 236L1030 544L1034 564L1046 786C1060 806 1082 815 1112 815L1139 812L1165 660L1175 520L1163 236z" fill="url(#cyl)"/>
        <ellipse cx="1224" cy="606" rx="14" ry="35" transform="rotate(9 1224 606)" fill="url(#boreR)" stroke="#4a4a4a" stroke-width=".8"/>
        <path d="M1018 240C1016 195 1052 173 1089 173C1130 173 1164 200 1163 240C1152 264 1126 277 1088 277C1056 277 1028 262 1018 240z" fill="url(#dome)"/>
        <path d="M1018 240C1016 195 1052 173 1089 173C1130 173 1164 200 1163 240C1152 264 1126 277 1088 277C1056 277 1028 262 1018 240z" fill="url(#domeShade)"/>
        <ellipse cx="1120" cy="238" rx="42" ry="18" transform="rotate(-32 1120 238)" fill="url(#shine)"/>
        <path d="M1018 240C1028 262 1056 277 1088 277C1126 277 1152 264 1163 240" fill="none" stroke="#777"/>
        <ellipse cx="1088.500" cy="204" rx="36" ry="22.500" fill="#a2a2a2" stroke="#3c3c3c" stroke-width=".8"/>
        <path d="M1030 543L855 706Q842 715 840 731Q840 743 843 753L860 741L1035 561z" fill="#474747"/>
        <path d="M1035 561L859 721Q843 735 843 751C843 781 872 797 900 797Q915 797 932 795L1046 786z" fill="#5e5e5e"/>
        <path d="M1032 545l3 17 11 224M855 708l3 16" fill="none" stroke="#9a9a9a" stroke-width=".8"/>
        <ellipse cx="897" cy="755" rx="35.500" ry="28" fill="url(#boreL)"/>
        <path d="M863 747C868 736 882 727 898 727C912 727 924 732 929 739C922 752 908 761 893 761C880 761 868 756 863 747z" fill="#f8f9fe"/>
        <path d="M863 747C868 756 880 761 893 761C908 761 922 752 929 739" fill="none" stroke="#333" stroke-width=".9"/>
        <path d="M1132 587L1243 832Q1252 849 1251 867Q1249 893 1239 893Q1233 893 1226 887L1139 812z" fill="#424242"/>
        <path d="M1132 587l7 225" stroke="#8c8c8c" stroke-width=".8"/>
        <path d="M1132 587L1160 574L1272 821L1243 832z" fill="#fff" stroke="#555" stroke-width=".8"/>
        <path d="M1243 832L1272 821Q1283 844 1282 857Q1281 874 1274 878L1243 892Q1250 884 1251 867Q1252 849 1243 832z" fill="url(#endF)" stroke="#555" stroke-width=".8"/>
        <ellipse cx="1221" cy="842" rx="17" ry="36" transform="rotate(-18 1221 842)" fill="url(#boreF)" stroke="#999" stroke-width=".8"/>
        <g>
          <path d="M1807 856l3 20" stroke="#064a24" stroke-width="3"/>
          <path d="M1799 853l3-7h12l1 7-3 5-6 3z" fill="#075a2c"/>
          <path d="M1810 846l2 46" stroke="#0a0a78" stroke-width="5"/>
          <path d="M1809 826l9 17-3 5h-10l-4-5z" fill="#1616b4"/>
          <path d="M1812 892l62-5" stroke="#8c0c12" stroke-width="5"/>
          <path d="M1874 879l21 7-20 9z" fill="#d01018"/>
          <circle cx="1846.500" cy="834" r="8.500" fill="#18a0a0"/><circle cx="1845" cy="831" r="4" fill="#38c0bc"/>
          <text x="1807" y="817" font-size="12" fill="#1c1c60" font-family="Liberation Sans">Z</text>
          <text x="1804" y="829" font-size="8" fill="#4a7a50" font-family="Liberation Sans">Y</text>
          <text x="1907" y="885" font-size="12" fill="#d03050" font-family="Liberation Sans">X</text>
        </g>
      </svg>
      <div class="absolute top-6 right-[15px] text-right font-['Inter',sans-serif] text-white">
        <p class="text-[28px] leading-7 font-bold">ANSYS</p>
        <p class="text-[17px] leading-4 font-light">2021 <b class="font-bold">R1</b></p>
      </div>
      <p class="absolute top-[297px] left-[124px] flex items-baseline gap-[7px] whitespace-nowrap text-[#e6ecf8] [text-shadow:1px_1px_1px_#3c465a]"><span class="font-['Noto_Sans_CJK_SC',sans-serif] text-[78px] leading-[100px] font-light">莫西网</span><span class="font-['Liberation_Mono',monospace] text-[67px] leading-[100px]">www.3dmox.com</span></p>
      <div class="absolute bottom-5 left-1/2 w-[363px] -translate-x-[182px] text-black">
        <div class="flex justify-between"><span class="-ml-3">0.00</span><span class="ml-1.5">50.00</span><span class="-mr-[38px]">100.00 (m)</span></div>
        <div class="flex h-4 border border-black bg-white"><div class="w-1/4 bg-black"></div><div class="w-1/4"></div><div class="w-1/4 bg-black"></div></div>
        <div class="mt-2 flex justify-around"><span>25.00</span><span>75.00</span></div>
      </div>
    </div>
    <div class="flex h-6 shrink-0 items-start" role="tablist">
      <button role="tab" aria-selected="true" class="ml-0.5 h-[23px] w-[74px] border-b-2 border-[#6c6c6c] pt-1 text-center">Model View</button>
      <div class="flex flex-1 border-t-2 border-[#6c6c6c]"><button role="tab" class="h-[19px] w-[77px] rounded-br-sm border-r-2 border-b-2 border-l-2 border-[#6c6c6c] text-center text-black">Print Preview</button></div>
    </div>
  </section>
</main>

<footer class="mt-0.5 flex h-[22px] shrink-0 items-center border-t border-[#9a9a9a]">
  <svg class="mr-3 ml-[10px] size-4" viewBox="0 0 16 16"><circle cx="8" cy="8" r="8" fill="url(#okFace)"/><path d="M4 8.500l3 3 5-7" fill="none" stroke="#fff" stroke-width="2"/></svg>
  <span class="flex-1">Ready</span>
  <span class="w-[437px] border-l border-[#a0a0a0] pl-0.5 leading-5">No Selection</span>
  <span class="ml-[5px] flex w-[189px] gap-[9px] border-l border-[#a0a0a0] pl-0.5 leading-5"><span>Meter</span><span>Degree</span></span>
  <span class="ml-0.5 w-14 border-l border-[#a0a0a0] pl-0.5 leading-5">0</span>
  <span class="ml-0.5 w-14 border-l border-[#a0a0a0] pl-0.5 leading-5">0</span>
  <svg class="ml-0.5 h-5 w-[18px]" viewBox="0 0 18 20"><path d="M5 19L18 5M9 19l9-9M14 19l4-4" stroke="#8c8c8c" stroke-width="1.500"/></svg>
</footer>
</body>
</html>
